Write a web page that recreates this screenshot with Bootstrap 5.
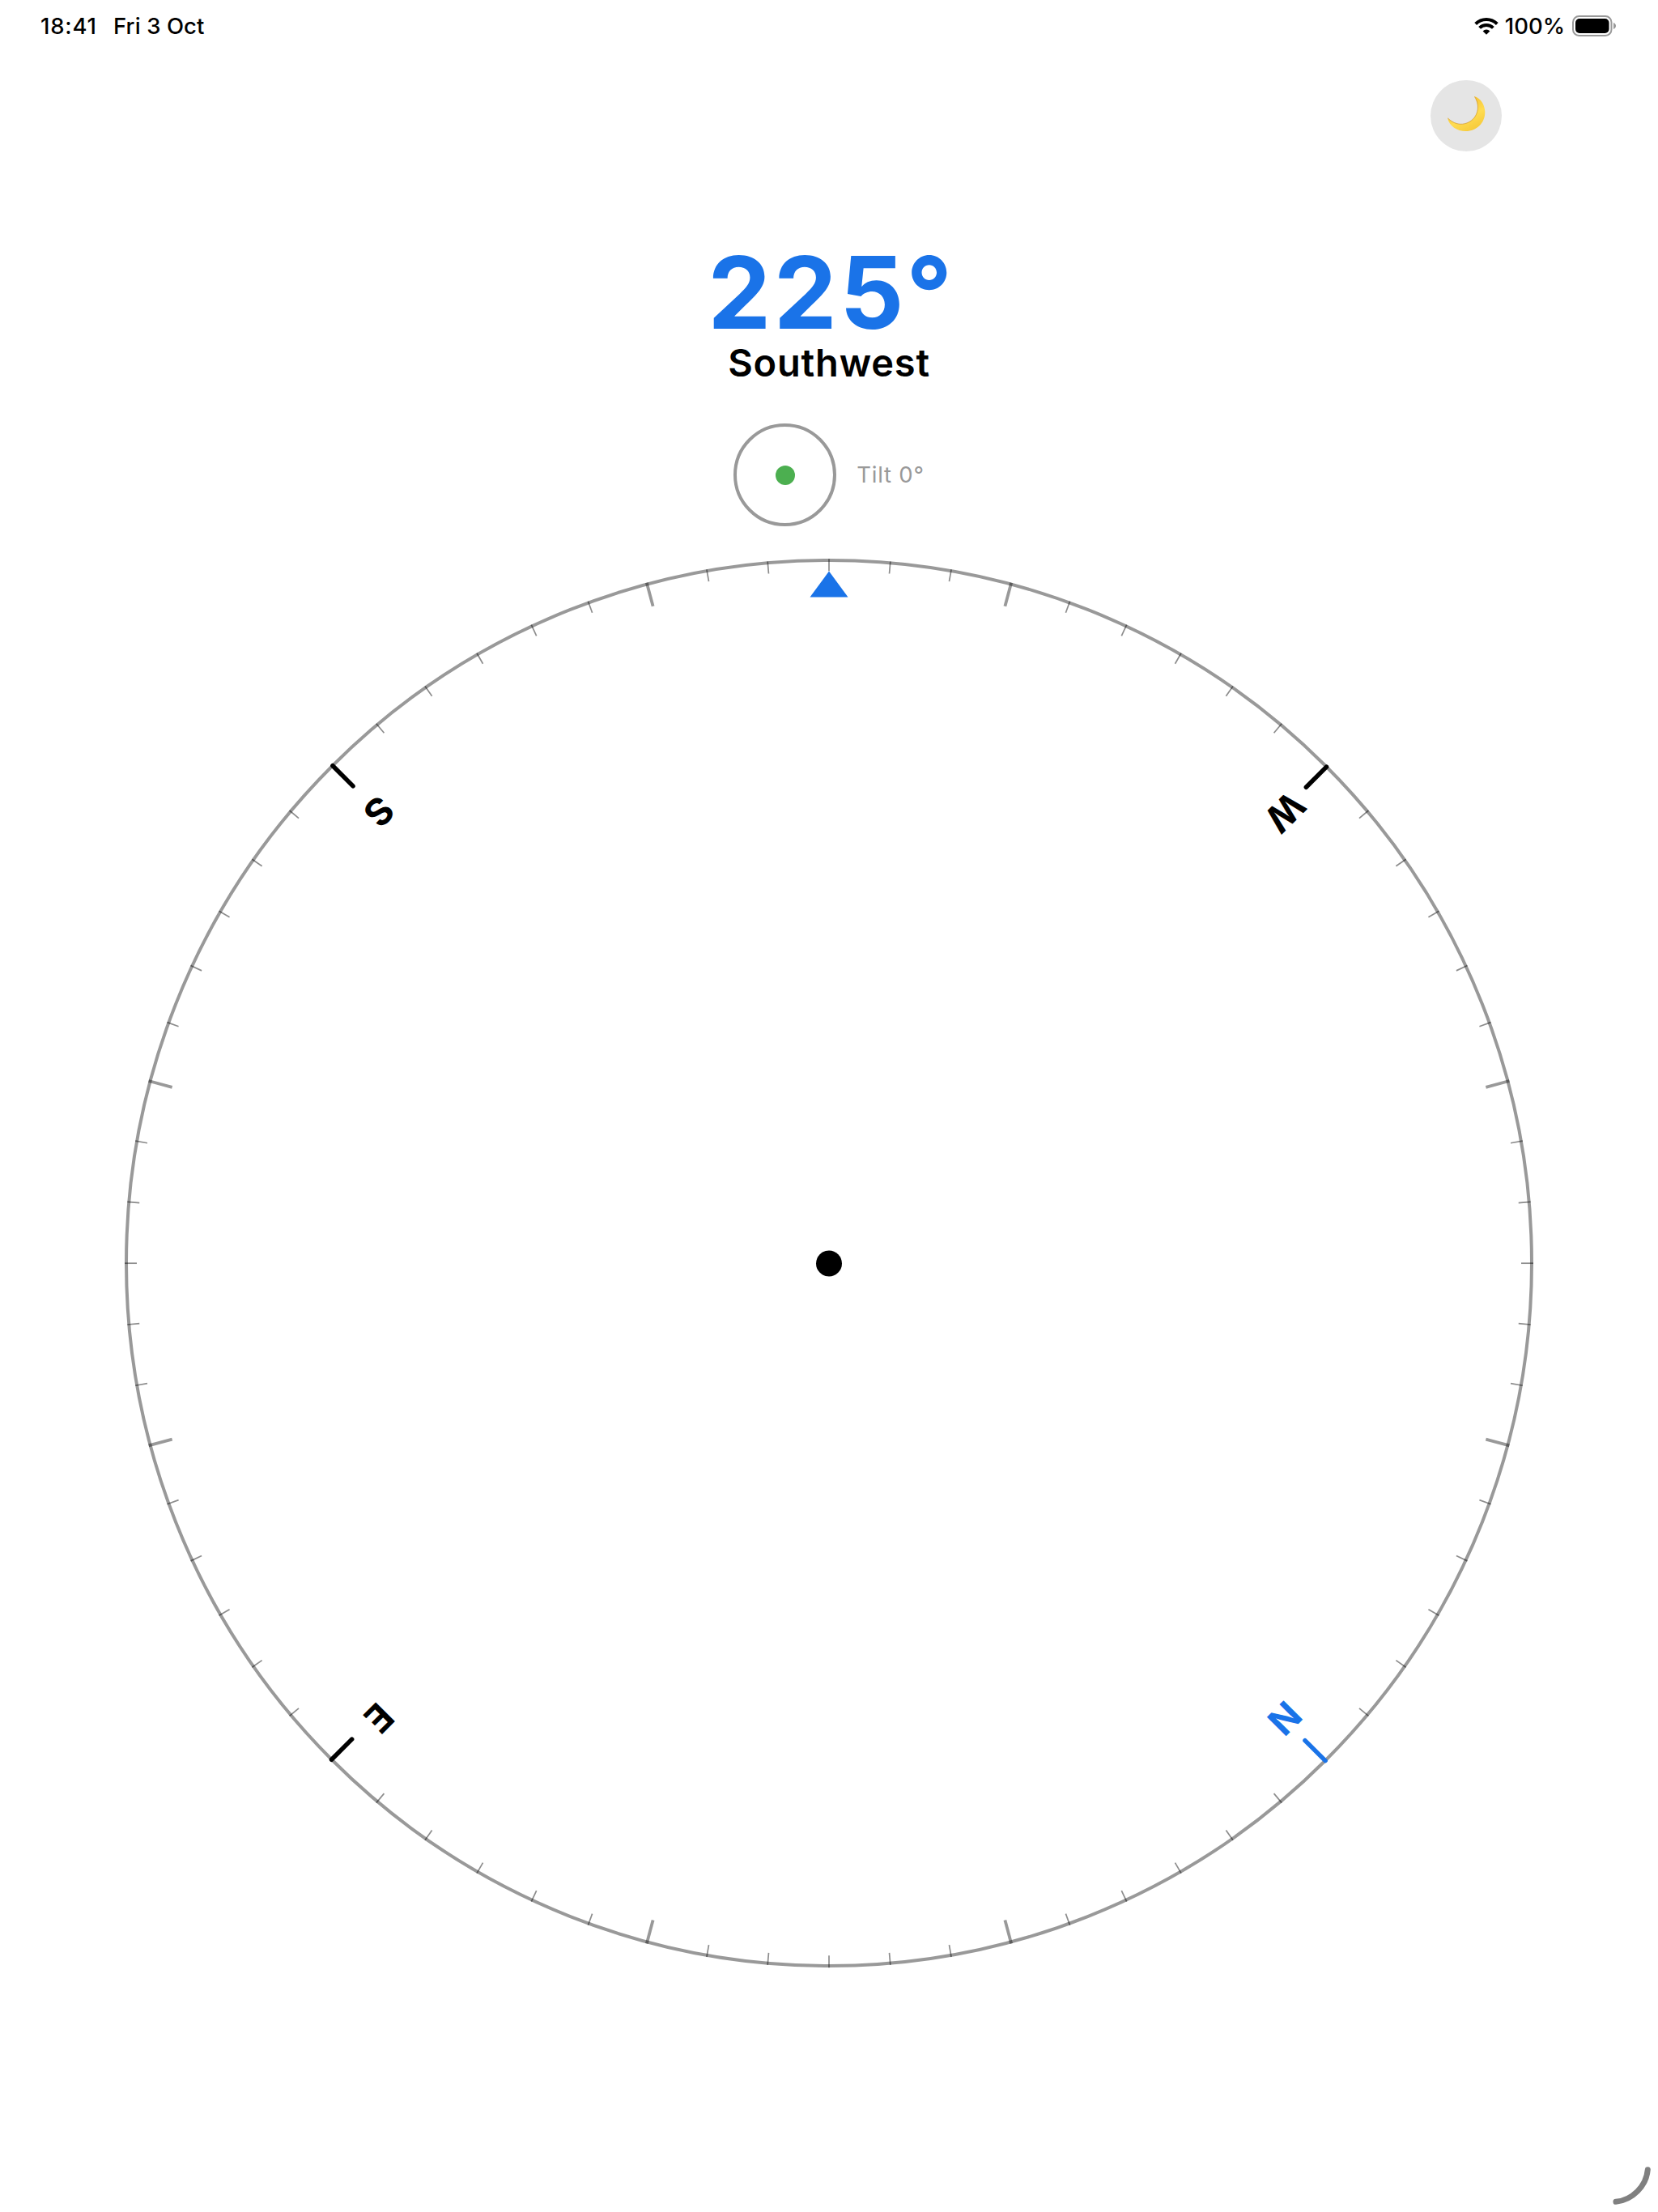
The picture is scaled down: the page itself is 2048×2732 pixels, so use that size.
<!DOCTYPE html>
<html lang="en">
<head>
<meta charset="utf-8">
<meta name="viewport" content="width=device-width, initial-scale=1">
<title>Compass</title>
<link href="https://cdn.jsdelivr.net/npm/bootstrap@5.3.0/dist/css/bootstrap.min.css" rel="stylesheet">
<style>
  body { font-family: Inter, "Liberation Sans", sans-serif; background: #fff; color: #000; height: 2732px; overflow: hidden; }
  svg { display: block; flex: none; }
  .status-bar { height: 64px; padding: 0 51px 0 50px; font-size: 27.5px; font-weight: 500; line-height: 64px; }
  .status-time { width: 90px; letter-spacing: .8px; }
  .status-date { letter-spacing: .1px; }
  .status-pct { margin: 0 9px 0 8px; letter-spacing: 0; }
  .toolbar-row { height: 123px; padding: 35px 193px 0 0; }
  .theme-btn { width: 88px; height: 88px; background: #e5e5e5; }
  .readout { padding-top: 112px; }
  .heading-deg { font-size: 124px; font-weight: 700; line-height: 124px; letter-spacing: 3.4px; padding-left: 6px; color: #1a73e8; height: 124px; }
  .heading-name { font-size: 47px; font-weight: 600; line-height: 52px; letter-spacing: .8px; margin-top: -1px; }
  .tilt-row { height: 127px; margin-top: 49px; gap: 25px; }
  .tilt-ring { width: 127px; height: 127px; border: 4px solid #999; }
  .tilt-dot { width: 24px; height: 24px; background: #4caf50; }
  .tilt-label { font-size: 27.5px; letter-spacing: .8px; color: #999; padding-top: 1px; }
  .dial-letter { font-size: 46px; font-weight: 700; text-anchor: middle; }
  .corner-mark { right: 0; bottom: 0; }
</style>
<script src="https://cdn.jsdelivr.net/npm/bootstrap@5.3.0/dist/js/bootstrap.bundle.min.js"></script>
</head>
<body class="d-flex flex-column position-relative">
  <header class="status-bar d-flex align-items-center">
    <span class="status-time">18:41</span>
    <span class="status-date">Fri 3 Oct</span>
    <div class="d-flex align-items-center ms-auto">
      <svg width="30" height="22" viewBox="0 0 30 22" fill="none" stroke="#000" stroke-width="4">
        <path d="M1.700 8.500a19 19 0 0 1 26.600 0"/>
        <path d="M6.600 13.400a12 12 0 0 1 16.800 0"/>
        <path d="M10.600 17.400a6.200 6.200 0 0 1 8.800 0L15 21.700Z" fill="#000" stroke="none"/>
      </svg>
      <span class="status-pct">100%</span>
      <svg width="55" height="26" viewBox="0 0 55 26">
        <rect x="1" y="1" width="47.500" height="24" rx="7.500" fill="none" stroke="#999" stroke-width="2"/>
        <rect x="4" y="4" width="41.500" height="18" rx="5" fill="#000"/>
        <path d="M51 9c4 1.400 4 6.600 0 8Z" fill="#999"/>
      </svg>
    </div>
  </header>

  <div class="toolbar-row d-flex justify-content-end">
    <button type="button" class="theme-btn btn rounded-circle border-0 p-0" aria-label="Dark mode">
      <svg width="88" height="88" viewBox="0 0 88 88">
        <defs>
          <linearGradient id="moonFill" x1=".2" y1="0" x2=".75" y2="1">
            <stop offset="0" stop-color="#f0b528"/><stop offset=".6" stop-color="#ffdc50"/><stop offset="1" stop-color="#f5c838"/>
          </linearGradient>
        </defs>
        <path d="M54 20C62 22 67.300 31 67.300 39.500C67.300 53 57 63 43.500 63C33 63 23 57 21 46.500C28 53.500 37 56.500 46 52.500C58.500 47 62 32 54 20Z" fill="url(#moonFill)"/>
        <path d="M21.500 47C28 53.500 37 56.500 46 52.500C58.500 47 62 32 54.500 20.500" fill="none" stroke="#c98a1c" stroke-width="1" opacity=".6"/>
      </svg>
    </button>
  </div>

  <main class="d-flex flex-column align-items-center">
    <section class="readout text-center">
      <div class="heading-deg">225°</div>
      <div class="heading-name">Southwest</div>
    </section>
    <section class="tilt-row d-flex align-items-center">
      <div class="tilt-ring rounded-circle d-flex align-items-center justify-content-center"><div class="tilt-dot rounded-circle"></div></div>
      <div class="tilt-label">Tilt 0°</div>
    </section>
    <svg id="dial" width="2048" height="1830" viewBox="0 650 2048 1830">
      <circle cx="1024" cy="1560" r="868" fill="none" stroke="#000" stroke-opacity=".4" stroke-width="4"/>
      <g id="ticks" transform="translate(1024 1560.200)"></g>
      <path d="M1024 705.500L1047.500 737.500H1000.500Z" fill="#1a73e8"/>
      <circle cx="1024" cy="1560.500" r="16" fill="#000"/>
      <g class="dial-letter">
        <text transform="translate(468.300 1002.300) rotate(135)" y="16.500">S</text>
        <text transform="translate(1587 1003) rotate(135)" y="16.500">W</text>
        <text transform="translate(468 2121.700) rotate(135)" y="16.500">E</text>
        <text transform="translate(1586.700 2122) rotate(135)" y="16.500" fill="#1a73e8">N</text>
      </g>
    </svg>
  </main>

  <svg class="corner-mark position-absolute" width="100" height="100" viewBox="0 0 100 100" fill="none" stroke="#808080" stroke-width="7" stroke-linecap="round">
    <path d="M87.300 47.700C85.500 68 68.500 85.300 48 87.300"/>
  </svg>

<script>
  // A tick every 5 degrees: cardinals every 90 (from 45), long ones every 30 (from 15).
  const ticks = document.getElementById('ticks');
  for (let a = 0; a < 360; a += 5) {
    const line = document.createElementNS('http://www.w3.org/2000/svg', 'line');
    const set = (k, v) => line.setAttribute(k, v);
    const cardinal = a % 90 === 45;
    const long = a % 30 === 15;
    set('x1', cardinal ? 1 : 0);
    set('x2', cardinal ? 1 : 0);
    set('y1', cardinal ? -868 : -870);
    set('y2', cardinal ? -832.5 : long ? -840 : -855);
    set('stroke', a === 135 ? '#1a73e8' : '#000');
    set('stroke-width', cardinal ? 5.5 : long ? 3.8 : 1.7);
    set('stroke-opacity', cardinal ? 1 : long ? .4 : .45);
    if (cardinal) set('stroke-linecap', 'round');
    set('transform', `rotate(${a})`);
    ticks.appendChild(line);
  }
</script>
</body>
</html>
